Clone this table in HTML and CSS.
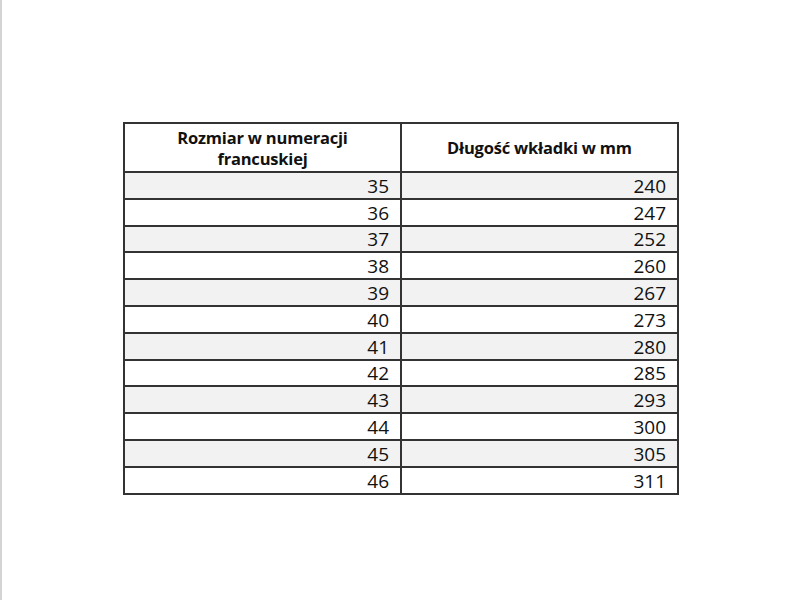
FILE: index.html
```html
<!DOCTYPE html>
<html lang="pl">
<head>
<meta charset="utf-8">
<link rel="stylesheet" href="styles.css">
</head>
<body>
<div class="page">
  <table class="sizes">
    <thead>
      <tr>
        <th>Rozmiar w numeracji<br>francuskiej</th>
        <th>Długość wkładki w mm</th>
      </tr>
    </thead>
    <tbody>
      <tr class="shade"><td>35</td><td>240</td></tr>
      <tr><td>36</td><td>247</td></tr>
      <tr class="shade"><td>37</td><td>252</td></tr>
      <tr><td>38</td><td>260</td></tr>
      <tr class="shade"><td>39</td><td>267</td></tr>
      <tr><td>40</td><td>273</td></tr>
      <tr class="shade"><td>41</td><td>280</td></tr>
      <tr><td>42</td><td>285</td></tr>
      <tr class="shade"><td>43</td><td>293</td></tr>
      <tr><td>44</td><td>300</td></tr>
      <tr class="shade"><td>45</td><td>305</td></tr>
      <tr><td>46</td><td>311</td></tr>
    </tbody>
  </table>
</div>
</body>
</html>
```

FILE: styles.css
```css
html, body {
  margin: 0;
  padding: 0;
  background: #ffffff;
}
body {
  width: 800px;
  height: 600px;
  overflow: hidden;
  font-family: "Open Sans", "Liberation Sans", sans-serif;
  color: #111;
}
.page {
  box-sizing: border-box;
  height: 600px;
  border-left: 2px solid #d4d4d4;
  padding-top: 122px;
  padding-left: 121px;
}
.sizes {
  border-collapse: collapse;
  table-layout: fixed;
  width: 556px;
  border: 2px solid #333;
}
.sizes th, .sizes td {
  border: 2px solid #333;
  width: 50%;
  box-sizing: border-box;
}
.sizes th {
  height: 49px;
  padding: 0;
  font-weight: bold;
  font-size: 16.5px;
  line-height: 21px;
  letter-spacing: -0.2px;
  text-align: center;
  vertical-align: middle;
}
.sizes td {
  height: 26.8px;
  padding: 1px 11px 0 0;
  font-size: 19px;
  line-height: 22px;
  text-align: right;
  vertical-align: middle;
}
.sizes tr.shade td {
  background: #f2f2f2;
}
```
